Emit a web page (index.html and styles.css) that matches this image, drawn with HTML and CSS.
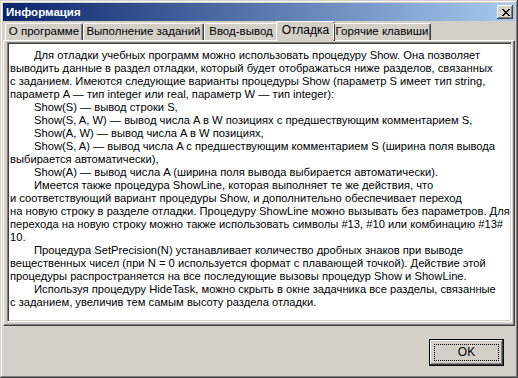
FILE: index.html
```
<!DOCTYPE html>
<html>
<head>
	<meta charset="utf-8" />
	<link rel="stylesheet" href="styles.css">
</head>
<body>
<div class="window">
	<div class="titlebar">
		<span class="title">Информация</span>
		<div class="close_btn">
			<svg width="8" height="7" viewBox="0 0 8 7"><path d="M0 0h2v1h1v1h2v-1h1v-1h2v1h-1v1h-1v1h-1v1h1v1h1v1h1v1h-2v-1h-1v-1h-2v1h-1v1h-2v-1h1v-1h1v-1h1v-1h-1v-1h-1v-1h-1z" fill="#000"/></svg>
		</div>
	</div>
	<div class="client">
		<div class="tabs">
			<div class="tab tab_1">О программе</div>
			<div class="tab tab_2">Выполнение заданий</div>
			<div class="tab tab_3">Ввод-вывод</div>
			<div class="tab tab_active">Отладка</div>
			<div class="tab tab_5">Горячие клавиши</div>
		</div>
		<div class="page">
			<div class="memo">
				<p class="para">Для отладки учебных программ можно использовать процедуру Show. Она позволяет<br>выводить данные в раздел отладки, который будет отображаться ниже разделов, связанных<br>с заданием. Имеются следующие варианты процедуры Show (параметр S имеет тип string,<br>параметр A — тип integer или real, параметр W — тип integer):</p>
				<p class="para">Show(S) — вывод строки S,</p>
				<p class="para">Show(S, A, W) — вывод числа A в W позициях с предшествующим комментарием S,</p>
				<p class="para">Show(A, W) — вывод числа A в W позициях,</p>
				<p class="para">Show(S, A) — вывод числа A с предшествующим комментарием S (ширина поля вывода<br>выбирается автоматически),</p>
				<p class="para">Show(A) — вывод числа A (ширина поля вывода выбирается автоматически).</p>
				<p class="para">Имеется также процедура ShowLine, которая выполняет те же действия, что<br>и соответствующий вариант процедуры Show, и дополнительно обеспечивает переход<br>на новую строку в разделе отладки. Процедуру ShowLine можно вызывать без параметров. Для<br>перехода на новую строку можно также использовать символы #13, #10 или комбинацию #13#<br>10.</p>
				<p class="para">Процедура SetPrecision(N) устанавливает количество дробных знаков при выводе<br>вещественных чисел (при N = 0 используется формат с плавающей точкой). Действие этой<br>процедуры распространяется на все последующие вызовы процедур Show и ShowLine.</p>
				<p class="para">Используя процедуру HideTask, можно скрыть в окне задачника все разделы, связанные<br>с заданием, увеличив тем самым высоту раздела отладки.</p>
			</div>
		</div>
		<div class="footer">
			<button type="button" class="ok_btn"><span class="ok_focus">OK</span></button>
		</div>
	</div>
</div>
</body>
</html>
```
FILE: styles.css
```
body {
	margin: 0;
	background-color: #d4d0c8;
	font-family: "Liberation Sans", Arial, sans-serif;
	font-size: 11.2px;
	color: #000;
}

.window {
	width: 518px;
	height: 378px;
	box-sizing: border-box;
	padding: 3px;
	background-color: #d4d0c8;
	box-shadow: inset -1px -1px #404040, inset 1px 1px #d4d0c8, inset -2px -2px #808080, inset 2px 2px #fff;
	display: flex;
	flex-direction: column;
}

.titlebar {
	height: 18px;
	background: linear-gradient(to right, #0a246a, #a6caf0);
	display: flex;
	align-items: center;
	justify-content: space-between;
	padding: 0 2px 0 3px;
}

.title {
	color: #fff;
	font-weight: bold;
	font-size: 11.5px;
}

.close_btn {
	width: 16px;
	height: 14px;
	box-sizing: border-box;
	background-color: #d4d0c8;
	box-shadow: inset -1px -1px #404040, inset 1px 1px #fff, inset -2px -2px #808080;
	display: flex;
	align-items: center;
	justify-content: center;
	padding-left: 1px;
}

.close_btn svg {
	display: block;
}

.client {
	flex: 1;
	display: flex;
	flex-direction: column;
}

.tabs {
	display: flex;
	height: 19px;
	padding-left: 2px;
	position: relative;
	z-index: 1;
}

.tab {
	box-sizing: border-box;
	height: 17px;
	margin-top: 2px;
	border-top: 1px solid #fff;
	border-left: 1px solid #fff;
	border-right: 1px solid #404040;
	border-radius: 2px 2px 0 0;
	box-shadow: inset -1px 0 #808080;
	text-align: center;
	line-height: 15px;
	font-size: 11.5px;
	white-space: nowrap;
}

.tab_1 { width: 78px; }
.tab_2 { width: 121px; }
.tab_3 { width: 74px; }
.tab_5 { width: 98px; }

.tab_active {
	width: 59px;
	height: 20px;
	margin-top: 0;
	margin-left: -2px;
	margin-right: -2px;
	background-color: #d4d0c8;
	line-height: 17px;
	font-size: 12px;
}

.page {
	height: 286px;
	box-sizing: border-box;
	border-top: 1px solid #fff;
	border-left: 1px solid #fff;
	border-right: 1px solid #404040;
	border-bottom: 1px solid #404040;
	box-shadow: inset -1px -1px #808080;
	padding: 1px 2px 3px 3px;
	display: flex;
}

.memo {
	flex: 1;
	background-color: #fff;
	border-top: 1px solid #808080;
	border-left: 1px solid #808080;
	border-right: 1px solid #fff;
	border-bottom: 1px solid #fff;
	box-shadow: inset 1px 1px #404040, inset -1px -1px #d4d0c8;
	padding: 6px 2px 0 2px;
	overflow: hidden;
}

.para {
	margin: 0;
	text-indent: 24px;
	line-height: 13px;
	white-space: nowrap;
}

.footer {
	flex: 1;
	display: flex;
	justify-content: flex-end;
	align-items: flex-start;
	padding: 13px 11px 0 0;
}

.ok_btn {
	width: 75px;
	height: 27px;
	background-color: #d4d0c8;
	border: 1px solid #000;
	box-shadow: inset -1px -1px #404040, inset 1px 1px #fff, inset -2px -2px #808080;
	font-family: "Liberation Sans", Arial, sans-serif;
	font-size: 12px;
	padding: 4px;
	display: flex;
}

.ok_focus {
	flex: 1;
	border: 1px dotted #000;
	line-height: 15px;
}
```
